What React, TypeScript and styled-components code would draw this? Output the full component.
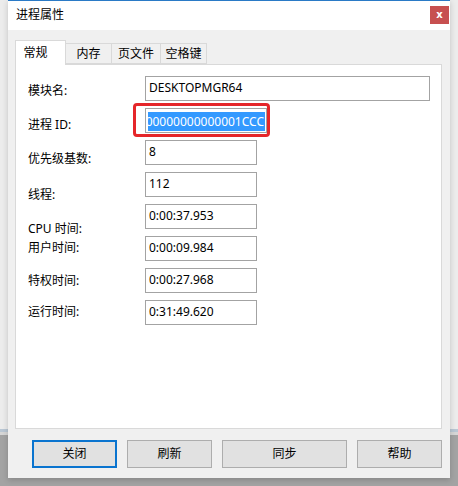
import styled, { createGlobalStyle } from "styled-components";

const GlobalStyle = createGlobalStyle`
  html, body {
    margin: 0;
    padding: 0;
  }
  body {
    width: 458px;
    height: 486px;
    overflow: hidden;
    font-family: "Noto Sans", "Noto Sans CJK SC", sans-serif;
    font-size: 12px;
    color: #000;
    background: linear-gradient(
      to bottom,
      #ececec 0,
      #ececec 429px,
      #bac7d4 429px,
      #bac7d4 432px,
      #d6d6d6 432px,
      #d6d6d6 435px,
      #a3a3a3 435px
    );
  }
`;

interface Row {
  label: string;
  value: string;
  width: number;
  drop: number;
  selected?: boolean;
}

const rows: Row[] = [
  { label: "模块名:", value: "DESKTOPMGR64", width: 285, drop: 7 },
  { label: "进程 ID:", value: "000000000000001CCC", width: 122, drop: 9, selected: true },
  { label: "优先级基数:", value: "8", width: 112, drop: 11 },
  { label: "线程:", value: "112", width: 112, drop: 15 },
  { label: "CPU 时间:", value: "0:00:37.953", width: 112, drop: 17 },
  { label: "用户时间:", value: "0:00:09.984", width: 112, drop: 4 },
  { label: "特权时间:", value: "0:00:27.968", width: 112, drop: 5 },
  { label: "运行时间:", value: "0:31:49.620", width: 112, drop: 4 },
];

const tabs = [
  { name: "常规", width: 51 },
  { name: "内存", width: 46 },
  { name: "页文件", width: 49 },
  { name: "空格键", width: 46 },
];

const buttons = [
  { name: "关闭", width: 85, primary: true },
  { name: "刷新", width: 85 },
  { name: "同步", width: 125 },
  { name: "帮助", width: 85 },
];

const App = () => {
  return (
    <>
      <GlobalStyle />
      <Window>
        <TitleBar>
          <Title>进程属性</Title>
          <CloseButton>x</CloseButton>
        </TitleBar>
        <Body>
          <TabStrip>
            {tabs.map((t, i) => (
              <Tab key={t.name} $active={i === 0} $width={t.width}>
                {t.name}
              </Tab>
            ))}
          </TabStrip>
          <Panel>
            <Form>
              {rows.map((r) => (
                <FormRow key={r.label}>
                  <Label $drop={r.drop}>{r.label}</Label>
                  <FieldWrap>
                    {r.selected ? (
                      <>
                        <Field $width={r.width} $selected>
                          <SelectionClip>
                            <Selection>{r.value}</Selection>
                          </SelectionClip>
                        </Field>
                        <Highlight />
                      </>
                    ) : (
                      <Field $width={r.width}>{r.value}</Field>
                    )}
                  </FieldWrap>
                </FormRow>
              ))}
            </Form>
          </Panel>
          <ButtonRow>
            {buttons.map((b) => (
              <Button key={b.name} $width={b.width} $primary={b.primary}>
                {b.name}
              </Button>
            ))}
          </ButtonRow>
        </Body>
      </Window>
    </>
  );
};

export default App;

const Window = styled.div`
  margin-left: 8px;
  width: 442px;
  height: 478px;
  box-sizing: border-box;
  border-top: 1px solid #2a7ac6;
  background: #f0f0f0;
  box-shadow: 0 2px 6px rgba(0, 0, 0, 0.18);
  display: flex;
  flex-direction: column;
`;

const TitleBar = styled.div`
  height: 29px;
  background: #fff;
  display: flex;
  align-items: center;
  justify-content: space-between;
  padding-left: 8px;
`;

const Title = styled.span`
  font-size: 12px;
  line-height: 16px;
  margin-top: -1px;
`;

const CloseButton = styled.div`
  width: 19px;
  height: 18px;
  margin-right: 1px;
  margin-top: -1px;
  background: #c75050;
  color: #fff;
  font-family: "DejaVu Sans", sans-serif;
  font-weight: bold;
  font-size: 10px;
  line-height: 16px;
  display: flex;
  align-items: center;
  justify-content: center;
`;

const Body = styled.div`
  padding: 10px 8px 0 7px;
  display: flex;
  flex-direction: column;
`;

const TabStrip = styled.div`
  display: flex;
  align-items: flex-end;
  height: 24px;
  position: relative;
  z-index: 1;
`;

const Tab = styled.div<{ $active?: boolean; $width: number }>`
  width: ${(p) => p.$width}px;
  box-sizing: border-box;
  height: ${(p) => (p.$active ? 25 : 21)}px;
  margin-bottom: ${(p) => (p.$active ? -1 : 0)}px;
  background: ${(p) => (p.$active ? "#fff" : "#f0f0f0")};
  border: 1px solid #d9d9d9;
  border-bottom: ${(p) => (p.$active ? "none" : "1px solid #d9d9d9")};
  border-left: ${(p) => (p.$active ? "1px solid #d9d9d9" : "none")};
  display: flex;
  align-items: center;
  justify-content: center;
  padding-right: ${(p) => (p.$active ? 10 : 0)}px;
  padding-bottom: ${(p) => (p.$active ? 1 : 0)}px;
  line-height: 16px;
`;

const Panel = styled.div`
  height: 365px;
  box-sizing: border-box;
  background: #fff;
  border: 1px solid #d9d9d9;
  padding: 11px 11px 0 12px;
`;

const Form = styled.div`
  display: grid;
  grid-template-columns: 117px 1fr;
  grid-auto-rows: 25px;
  row-gap: 7px;
`;

const FormRow = styled.div`
  display: contents;
`;

const Label = styled.div<{ $drop: number }>`
  padding-top: ${(p) => p.$drop}px;
  line-height: 16px;
  white-space: nowrap;
`;

const FieldWrap = styled.div`
  position: relative;
`;

const Field = styled.div<{ $width: number; $selected?: boolean }>`
  width: ${(p) => p.$width}px;
  height: 25px;
  box-sizing: border-box;
  border: 1px solid #a3a3a3;
  background: #fff;
  padding: ${(p) => (p.$selected ? "3px 1px 1px 2px" : "0 3px 2px 3px")};
  display: flex;
  align-items: center;
  line-height: 16px;
  white-space: nowrap;
`;

const SelectionClip = styled.div`
  flex: 1;
  height: 100%;
  overflow: hidden;
  display: flex;
  justify-content: flex-end;
`;

const Selection = styled.span`
  background: #3399ff;
  color: #fff;
  display: flex;
  align-items: center;
  padding-right: 1px;
  flex-shrink: 0;
`;

const Highlight = styled.div`
  position: absolute;
  left: -12px;
  top: -5px;
  width: 137px;
  height: 34px;
  box-sizing: border-box;
  border: 3px solid #e5262a;
  border-radius: 4px;
  pointer-events: none;
`;

const ButtonRow = styled.div`
  margin-top: 11px;
  display: flex;
  justify-content: flex-end;
  gap: 10px;
`;

const Button = styled.div<{ $width: number; $primary?: boolean }>`
  width: ${(p) => p.$width}px;
  height: 28px;
  box-sizing: border-box;
  background: #e1e1e1;
  border: ${(p) => (p.$primary ? "2px solid #0a74cf" : "1px solid #adadad")};
  display: flex;
  align-items: center;
  justify-content: center;
  line-height: 16px;
`;
